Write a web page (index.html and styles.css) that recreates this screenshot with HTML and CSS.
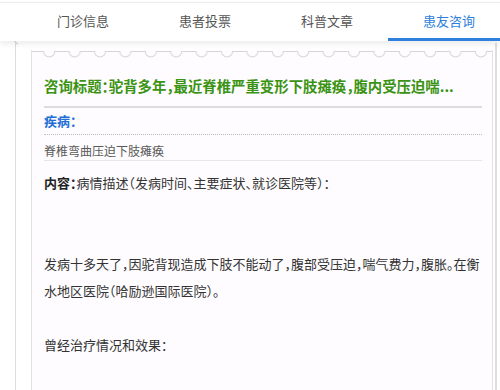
FILE: index.html
```html
<!DOCTYPE html>
<html lang="zh-CN">
<head>
    <meta charset="UTF-8">
    <meta name="viewport" content="width=device-width, initial-scale=1.0">
    <title>患友咨询</title>
    <link rel="stylesheet" href="styles.css">
</head>
<body>
    <nav class="tabs">
        <a class="tab">门诊信息</a>
        <a class="tab">患者投票</a>
        <a class="tab">科普文章</a>
        <a class="tab active">患友咨询</a>
    </nav>

    <div class="sheet">
        <div class="card">
            <!-- 花边顶部 -->
            <svg class="scallop" width="100%" height="8">
                <defs>
                    <pattern id="wave" x="4.5" y="0" width="25.4" height="8" patternUnits="userSpaceOnUse">
                        <path d="M0 1.5 H7.2 A5.5 5.5 0 0 0 18.2 1.5 H25.4" fill="none" stroke="#d6d6d6" stroke-width="1"/>
                    </pattern>
                </defs>
                <rect width="100%" height="8" fill="url(#wave)"/>
            </svg>

            <div class="card-body">
                <h2 class="q-title">咨询标题：驼背多年，最近脊椎严重变形下肢瘫痪，腹内受压迫喘...</h2>
                <div class="q-label">疾病：</div>
                <div class="q-disease">脊椎弯曲压迫下肢瘫痪</div>
                <div class="q-content">
                    <p class="gap-2"><strong>内容：</strong>病情描述（发病时间、主要症状、就诊医院等）：</p>
                    <p class="gap-1">发病十多天了，因驼背现造成下肢不能动了，腹部受压迫，喘气费力，腹胀。在衡水地区医院（哈励逊国际医院）。</p>
                    <p>曾经治疗情况和效果：</p>
                </div>
            </div>
        </div>
    </div>
</body>
</html>
```

FILE: styles.css
```css
:root {
    --green: #3b9314;
    --blue: #1f6fd6;
    --tab-blue: #2f7fdc;
    --text: #333;
    --muted: #5a5a5a;
}

body {
    margin: 0;
    font-family: "Noto Sans CJK SC", "Noto Sans", sans-serif;
    font-feature-settings: "halt";
    background: #fff;
    color: var(--text);
    overflow: hidden;
    height: 390px;
}

.tabs {
    position: relative;
    z-index: 1;
    display: flex;
    margin-top: 2px;
    padding-left: 22px;
    height: 38px;
    border-top: 1px solid #ececec;
    background: #fff;
    box-shadow: 0 3px 6px rgba(0, 0, 0, 0.08);
    overflow: hidden;
}

.tab {
    flex: 0 0 122px;
    box-sizing: border-box;
    text-align: center;
    font-size: 13px;
    line-height: 36px;
    color: #555;
    border-bottom: 3px solid transparent;
}

.tab.active {
    color: var(--tab-blue);
    border-bottom-color: var(--tab-blue);
}

.sheet {
    position: relative;
    margin: 2px 3px 0 15px;
    padding: 7px 2px 0 15px;
    border-left: 1px solid #dcdcdc;
    border-right: 2px solid #dedede;
    height: 340px;
}

.sheet::before {
    content: "";
    position: absolute;
    left: -5px;
    top: -2px;
    width: 8px;
    height: 1px;
    background: #d0d0d0;
    transform: rotate(45deg);
}

.card {
    height: 100%;
    background: #fefcfe;
    border-left: 1px solid #e2e2e2;
    border-right: 1px solid #e2e2e2;
}

.scallop {
    display: block;
}

.card-body {
    padding: 18px 10px 0 12px;
}

.q-title {
    margin: 0;
    padding-bottom: 10px;
    border-bottom: 2px solid #dcdcdc;
    font-size: 14.4px;
    line-height: 20px;
    font-weight: bold;
    color: var(--green);
    white-space: nowrap;
    overflow: hidden;
}

.q-label {
    font-size: 13px;
    line-height: 26px;
    font-weight: bold;
    color: var(--blue);
    border-bottom: 1px dotted #bdbdbd;
}

.q-disease {
    padding-top: 6px;
    font-size: 12px;
    line-height: 19px;
    color: var(--muted);
    border-bottom: 1px solid #e6e6e6;
}

.q-content {
    padding-top: 8px;
    font-size: 13px;
    line-height: 27px;
}

.q-content p {
    margin: 0;
}

.q-content strong {
    color: #222;
}

.gap-2 {
    margin-bottom: 54px !important;
}

.gap-1 {
    margin-bottom: 27px !important;
}
```
